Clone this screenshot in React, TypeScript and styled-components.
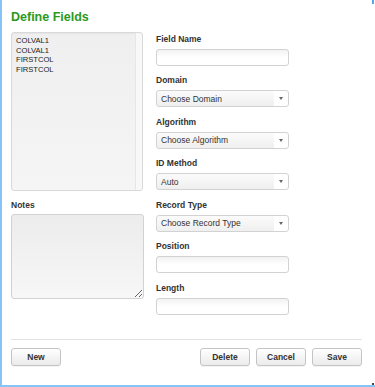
import React from "react";
import styled, { createGlobalStyle } from "styled-components";

const Global = createGlobalStyle`
  html, body { margin: 0; padding: 0; background: #fff; }
  body { font-family: "Liberation Sans", Arial, sans-serif; }
  * { box-sizing: border-box; }
`;

const Dialog = styled.div`
  position: relative;
  width: 375px;
  height: 387px;
  border-left: 2px solid #86c4f6;
  border-bottom: 2px solid #86c4f6;
  padding: 10px 13px 0 9px;
  display: flex;
  flex-direction: column;
  background: #fff;
`;

const CornerMark = styled.div<{ $top?: boolean }>`
  position: absolute;
  right: 1px;
  width: 2px;
  height: ${(p) => (p.$top ? "4px" : "2px")};
  ${(p) => (p.$top ? "top: 0;" : "bottom: 0;")}
  background: ${(p) => (p.$top ? "#5aa6e6" : "#3a4a5a")};
`;

const Title = styled.h1`
  margin: 0 0 7px;
  font-size: 12.5px;
  line-height: 15px;
  font-weight: bold;
  color: #2a9a1e;
`;

const Body = styled.div`
  display: grid;
  grid-template-columns: 133px 133px;
  column-gap: 12px;
`;

const LeftColumn = styled.div`
  display: flex;
  flex-direction: column;
`;

const RightColumn = styled.div`
  display: flex;
  flex-direction: column;
  gap: 9.6px;
  padding-top: 1.5px;
`;

const ListBox = styled.div`
  width: 132px;
  height: 159px;
  border: 1px solid #d9d9d9;
  border-radius: 3px;
  background: linear-gradient(#efefef, #f5f5f5);
  padding: 3px 0 0 4px;
  display: flex;
  box-shadow: inset 0 1px 1px rgba(0, 0, 0, 0.04);
`;

const Items = styled.div`
  flex: 1;
  display: flex;
  flex-direction: column;
`;

const ScrollTrack = styled.div`
  width: 7px;
  margin-top: -3px;
  border-left: 1px solid #e6e6e6;
  background: #f8f8f8;
  border-radius: 0 3px 3px 0;
`;

const Item = styled.div`
  font-size: 7.6px;
  line-height: 9.7px;
  color: #222;
`;

const Label = styled.label<{ $gapTop?: number }>`
  display: block;
  font-size: 8.5px;
  line-height: 10px;
  font-weight: bold;
  color: #333;
  margin-top: ${(p) => p.$gapTop ?? 0}px;
`;

const Field = styled.div`
  display: flex;
  flex-direction: column;
  gap: 5px;
`;

const TextInput = styled.input`
  width: 133px;
  height: 17px;
  border: 1px solid #d2d2d2;
  border-radius: 3px;
  background: linear-gradient(#f2f2f2, #fff 50%);
  padding: 0 4px;
  font: 8.5px "Liberation Sans", Arial, sans-serif;
  outline: none;
`;

const SelectBox = styled.div`
  position: relative;
  width: 133px;
  height: 17px;
  border: 1px solid #d2d2d2;
  border-radius: 3px;
  background: linear-gradient(#fbfbfb, #efefef) left / calc(100% - 14px) 100% no-repeat, #fff;
  padding: 0 0 0 4px;
  display: flex;
  align-items: center;
  font-size: 8.5px;
  color: #333;
`;

const Arrow = styled.span`
  position: absolute;
  right: 5.5px;
  top: 6px;
  width: 0;
  height: 0;
  border-left: 2px solid transparent;
  border-right: 2px solid transparent;
  border-top: 3px solid #666;
`;

const Notes = styled.textarea`
  margin-top: 4px;
  width: 133px;
  height: 85px;
  border: 1px solid #d2d2d2;
  border-radius: 3px;
  background: linear-gradient(#ececec, #f7f7f7);
  resize: both;
  outline: none;
  font: 8.5px "Liberation Sans", Arial, sans-serif;
`;

const Divider = styled.hr`
  margin: 24px 0 0;
  border: none;
  border-top: 1px solid #e2e2e2;
  height: 0;
`;

const Footer = styled.div`
  margin-top: 8px;
  display: flex;
  justify-content: space-between;
`;

const ButtonGroup = styled.div`
  display: flex;
  gap: 6px;
`;

const Button = styled.button`
  width: 50px;
  height: 17.5px;
  border: 1px solid #c4c4c4;
  border-radius: 3px;
  background: linear-gradient(#ffffff, #ebebeb);
  box-shadow: 0 1px 0 rgba(0, 0, 0, 0.04);
  font: bold 8.5px "Liberation Sans", Arial, sans-serif;
  color: #333;
  padding: 0;
`;

const items = ["COLVAL1", "COLVAL1", "FIRSTCOL", "FIRSTCOL"];

type FieldDef = { label: string; kind: "text" | "select"; value?: string };

const fields: FieldDef[] = [
  { label: "Field Name", kind: "text" },
  { label: "Domain", kind: "select", value: "Choose Domain" },
  { label: "Algorithm", kind: "select", value: "Choose Algorithm" },
  { label: "ID Method", kind: "select", value: "Auto" },
  { label: "Record Type", kind: "select", value: "Choose Record Type" },
  { label: "Position", kind: "text" },
  { label: "Length", kind: "text" },
];

export default function App() {
  return (
    <>
      <Global />
      <Dialog>
        <CornerMark $top />
        <CornerMark />
        <Title>Define Fields</Title>
        <Body>
          <LeftColumn>
            <ListBox>
              <Items>
                {items.map((it, i) => (
                  <Item key={i}>{it}</Item>
                ))}
              </Items>
              <ScrollTrack />
            </ListBox>
            <Label $gapTop={9.2}>Notes</Label>
            <Notes />
          </LeftColumn>
          <RightColumn>
            {fields.map((f) => (
              <Field key={f.label}>
                <Label>{f.label}</Label>
                {f.kind === "text" ? (
                  <TextInput type="text" />
                ) : (
                  <SelectBox role="combobox">
                    {f.value}
                    <Arrow />
                  </SelectBox>
                )}
              </Field>
            ))}
          </RightColumn>
        </Body>
        <Divider />
        <Footer>
          <Button>New</Button>
          <ButtonGroup>
            <Button>Delete</Button>
            <Button>Cancel</Button>
            <Button>Save</Button>
          </ButtonGroup>
        </Footer>
      </Dialog>
    </>
  );
}
